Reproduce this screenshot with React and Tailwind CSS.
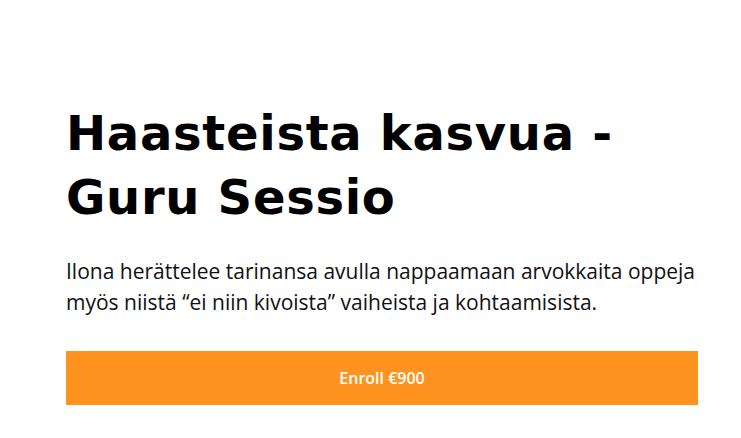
export default function App() {
  return (
    <div className="min-h-[438px] w-[741px] bg-white">
      <div className="ml-[66px] w-[632px] pt-[101px]">
        <h1 className="font-['DejaVu_Sans',sans-serif] text-[48px] font-bold leading-[64px] tracking-[0.7px] text-black">
          Haasteista kasvua - Guru Sessio
        </h1>
        <p className="mt-[27px] font-['Open_Sans',sans-serif] text-[21px] leading-[31px] text-[#111]">
          Ilona herättelee tarinansa avulla nappaamaan arvokkaita oppeja myös niistä “ei niin kivoista” vaiheista ja kohtaamisista.
        </p>
        <button className="mt-[33px] flex h-[54px] w-full items-center justify-center bg-[#ff9320] font-['Open_Sans',sans-serif] text-[16px] font-semibold text-white">
          Enroll €900
        </button>
      </div>
    </div>
  )
}
